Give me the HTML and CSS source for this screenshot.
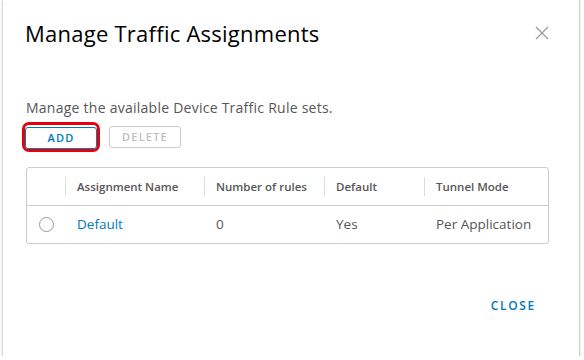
FILE: index.html
```html
<!DOCTYPE html>
<html lang="en">
<head>
<meta charset="UTF-8">
<link rel="stylesheet" href="styles.css">
<title>Manage Traffic Assignments</title>
</head>
<body>

<div class="modal">
    <div class="modal-header">
        <h3 class="modal-title">Manage Traffic Assignments</h3>
        <button type="button" class="close-x" aria-label="Close">
            <svg width="14" height="14" viewBox="0 0 14 14">
                <path d="M1 1 L13 13 M13 1 L1 13" stroke="#9a9a9a" stroke-width="1.2" fill="none"/>
            </svg>
        </button>
    </div>

    <div class="modal-body">
        <p class="intro">Manage the available Device Traffic Rule sets.</p>
        <div class="actions">
            <span class="highlight">
                <button type="button" class="btn btn-primary">ADD</button>
            </span>
            <button type="button" class="btn btn-disabled">DELETE</button>
        </div>

        <div class="grid">
            <div class="grid-row grid-head">
                <div class="cell cell-select"></div>
                <div class="cell col-name"><span class="sep"></span>Assignment Name</div>
                <div class="cell col-rules"><span class="sep"></span>Number of rules</div>
                <div class="cell col-default"><span class="sep"></span>Default</div>
                <div class="cell col-mode"><span class="sep"></span>Tunnel Mode</div>
            </div>
            <div class="grid-row">
                <div class="cell cell-select"><span class="radio"></span></div>
                <div class="cell col-name"><a href="#" class="link">Default</a></div>
                <div class="cell col-rules">0</div>
                <div class="cell col-default">Yes</div>
                <div class="cell col-mode">Per Application</div>
            </div>
        </div>
    </div>

    <div class="modal-footer">
        <button type="button" class="btn-link">CLOSE</button>
    </div>
</div>

</body>
</html>
```

FILE: styles.css
```css
body {
    margin: 0;
    background-color: #ffffff;
    font-family: "Open Sans", "Liberation Sans", sans-serif;
    color: #565656;
}

.modal {
    width: 578px;
    height: 356px;
    margin-left: 2px;
    box-sizing: border-box;
    border-left: 1px solid #dcdcdc;
    border-right: 1px solid #d0d0d0;
    box-shadow: 0 2px 1px rgba(0,0,0,0.35);
    background-color: #ffffff;
    display: flex;
    flex-direction: column;
}

.modal-header {
    display: flex;
    justify-content: space-between;
    align-items: flex-start;
    padding: 18px 30px 0 22px;
}

.modal-title {
    margin: 0;
    font-size: 22px;
    font-weight: 400;
    color: #000000;
    letter-spacing: 0.25px;
}

.close-x {
    border: none;
    background: none;
    padding: 0;
    margin-top: 8px;
    cursor: pointer;
}

.modal-body {
    padding: 0 30px 0 23px;
}

.intro {
    margin: 50px 0 5px 0;
    font-size: 14px;
    letter-spacing: 0.25px;
    color: #565656;
}

.actions {
    display: flex;
    align-items: center;
    gap: 9px;
    margin-bottom: 15px;
}

/* red annotation around the ADD button */
.highlight {
    display: inline-block;
    border: 3px solid #e8000b;
    border-radius: 7px;
    padding: 0;
    margin-left: -4px;
}

.btn {
    font-family: inherit;
    font-size: 11px;
    font-weight: 600;
    letter-spacing: 1.2px;
    height: 22px;
    padding: 0 12px;
    border-radius: 3px;
    background-color: #ffffff;
    cursor: pointer;
}

.btn-primary {
    width: 72px;
    border: 1px solid #0079b8;
    color: #0079b8;
}

.btn-disabled {
    width: 72px;
    border: 1px solid #cccccc;
    color: #c0c0c0;
    cursor: default;
}

.grid {
    border: 1px solid #cccccc;
    border-radius: 3px;
}

.grid-row {
    display: flex;
    height: 37px;
    align-items: center;
}

.grid-head {
    border-bottom: 1px solid #cccccc;
    font-size: 11.5px;
    font-weight: 600;
    color: #565656;
}

.grid-row + .grid-row {
    font-size: 13.5px;
    color: #565656;
}

.cell {
    position: relative;
    padding-left: 12px;
    height: 100%;
    display: flex;
    align-items: center;
    box-sizing: border-box;
}

.sep {
    position: absolute;
    left: 0;
    top: 9px;
    bottom: 9px;
    border-left: 1px solid #dddddd;
}

.cell-select { width: 38px; padding-left: 12px; }
.col-name { width: 139px; }
.col-rules { width: 120px; }
.col-default { width: 100px; }
.col-mode { flex: 1; }

.radio {
    width: 15px;
    height: 15px;
    border: 1px solid #9a9a9a;
    border-radius: 50%;
    box-sizing: border-box;
}

.link {
    color: #0079b8;
    text-decoration: none;
}

.modal-footer {
    margin-top: auto;
    display: flex;
    justify-content: flex-end;
    padding: 0 43px 42px 0;
}

.btn-link {
    border: none;
    background: none;
    padding: 0;
    font-family: inherit;
    font-size: 12px;
    font-weight: 600;
    letter-spacing: 1.7px;
    color: #0079b8;
    cursor: pointer;
}
```
